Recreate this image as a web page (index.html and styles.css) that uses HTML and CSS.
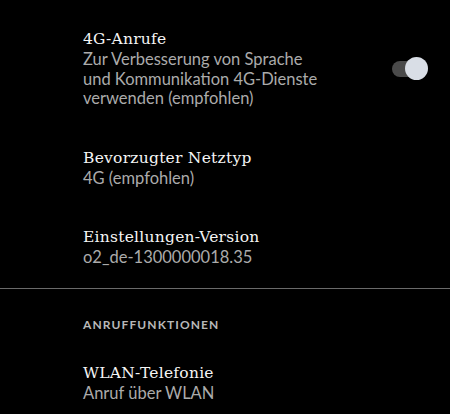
FILE: index.html
```html
<!DOCTYPE html>
<html lang="de">
<head>
<meta charset="utf-8">
<link rel="stylesheet" href="styles.css">
</head>
<body>
<div class="screen">
  <div class="item item-first">
    <div class="text">
      <div class="title">4G-Anrufe</div>
      <div class="sub">Zur Verbesserung von Sprache<br>und Kommunikation 4G-Dienste<br>verwenden (empfohlen)</div>
    </div>
    <div class="switch"><span class="track"></span><span class="thumb"></span></div>
  </div>
  <div class="item">
    <div class="text">
      <div class="title">Bevorzugter Netztyp</div>
      <div class="sub">4G (empfohlen)</div>
    </div>
  </div>
  <div class="item">
    <div class="text">
      <div class="title">Einstellungen-Version</div>
      <div class="sub">o2_de-1300000018.35</div>
    </div>
  </div>
  <div class="divider"></div>
  <div class="header">ANRUFFUNKTIONEN</div>
  <div class="item">
    <div class="text">
      <div class="title">WLAN-Telefonie</div>
      <div class="sub">Anruf über WLAN</div>
    </div>
  </div>
</div>
</body>
</html>
```
FILE: styles.css
```css
html, body {
  margin: 0;
  padding: 0;
  background: #000;
}
.screen {
  width: 450px;
  height: 414px;
  overflow: hidden;
  background: #000;
}
.item {
  display: flex;
  padding: 19px 0 19px 83px;
}
.item-first {
  padding-top: 28px;
}
.text {
  flex: 1;
}
.title {
  font-family: "DejaVu Serif", serif;
  font-size: 15.5px;
  line-height: 22px;
  letter-spacing: 0.25px;
  color: #f5f5f5;
}
.sub {
  font-family: Lato, "Liberation Sans", sans-serif;
  font-size: 16.5px;
  line-height: 19.5px;
  color: #ababab;
}
.switch {
  position: relative;
  align-self: flex-start;
  width: 36px;
  height: 23px;
  margin-top: 28.5px;
  margin-right: 22px;
}
.track {
  position: absolute;
  left: 0;
  top: 4px;
  width: 28px;
  height: 16px;
  border-radius: 8px;
  background: #4a4a4a;
}
.thumb {
  position: absolute;
  right: 0;
  top: 0;
  width: 23px;
  height: 23px;
  border-radius: 50%;
  background: #d9dee6;
}
.divider {
  height: 1px;
  background: #6a6a6a;
  margin-top: 1px;
}
.header {
  padding: 28px 0 10px 83px;
  font-family: Lato, "Liberation Sans", sans-serif;
  font-size: 12px;
  line-height: 16px;
  font-weight: 700;
  letter-spacing: 1.1px;
  color: #b8b8b8;
}
```
